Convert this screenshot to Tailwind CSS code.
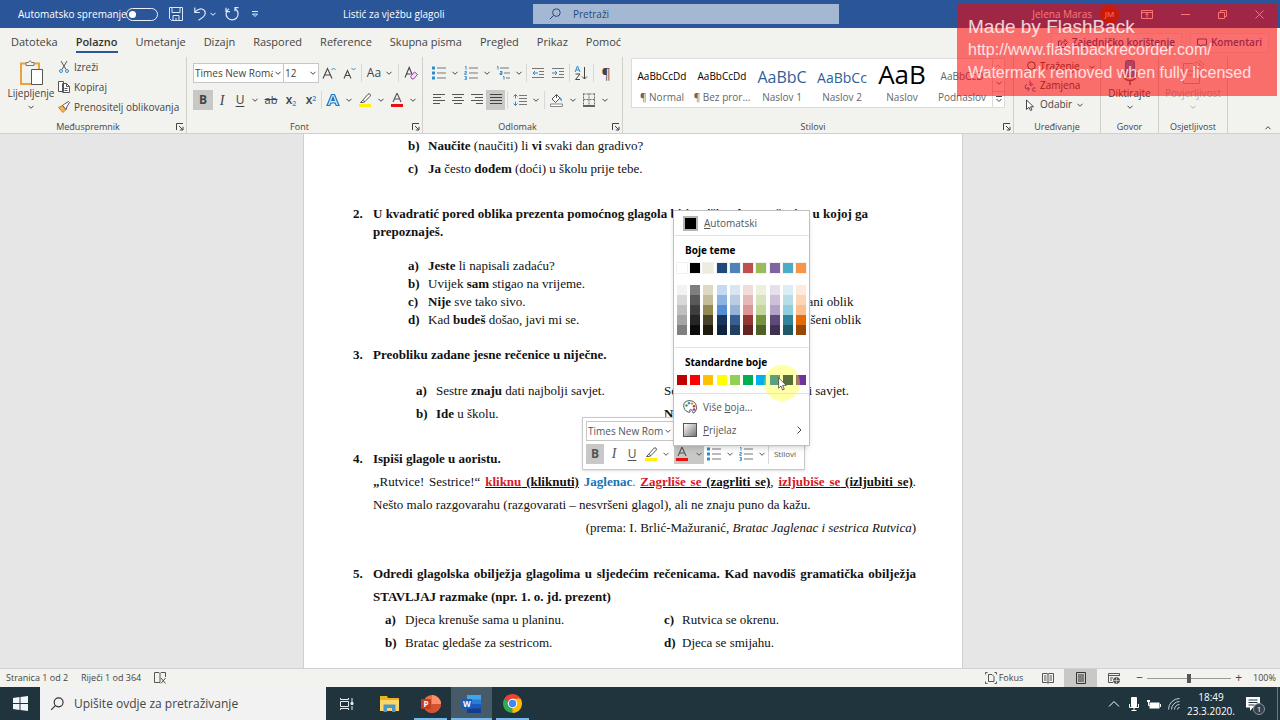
<!DOCTYPE html>
<html lang="hr">
  <head>
    <meta charset="UTF-8" />
    <meta name="viewport" content="width=device-width, initial-scale=1.0" />
    <title>Listić za vježbu glagoli</title>
    <script src="https://cdn.jsdelivr.net/npm/@tailwindcss/browser@4"></script>
  </head>
  <body class="h-screen flex flex-col overflow-hidden bg-[#f2f2ee] font-['Open_Sans',sans-serif] text-[10px] text-[#444]">
    <!-- Shared icons -->
    <svg class="hidden">
      <symbol id="chev" viewBox="0 0 8 8"><path d="M1.5 2.8 4 5.3 6.5 2.8" fill="none" stroke="currentColor" /></symbol>
      <symbol id="launch" viewBox="0 0 8 8"><path d="M.5 7V.5H7M3 3l4 4M7 3.8V7H3.8" fill="none" stroke="currentColor" /></symbol>
      <symbol id="glass" viewBox="0 0 12 12"><path d="M4.6 7.4 1 11" fill="none" stroke="currentColor" /><circle cx="7.4" cy="4.6" r="3.8" fill="none" stroke="currentColor" /></symbol>
      <symbol id="bullets" viewBox="0 0 14 14"><path d="M0 .5h3v3H0zM0 5.5h3v3H0zM0 10.500h3v3H0z" fill="#2e8bcc" /><path d="M5 2h9M5 7h9M5 12h9" stroke="#777" /></symbol>
      <symbol id="numbers" viewBox="0 0 14 14"><path d="M1 .8 2 .3v3.400M.6 5.500h1.800v1.500H.8v1.500h1.800M.6 10.500h1.800v3H.6M1 12h1.400" fill="none" stroke="#2e8bcc" stroke-width=".9" /><path d="M5 2h9M5 7h9M5 12h9" stroke="#777" /></symbol>
      <symbol id="marker" viewBox="0 0 14 14"><path d="M4.500 7.500 10 1.200q1-.9 2 0t.1 2L7 8.500zM4.500 7.500 2.500 9.500h3L7 8.500" fill="#fff" stroke="#555" /><path d="M1 11h12v3H1z" fill="#fff200" /></symbol>
      <symbol id="fontcolor" viewBox="0 0 14 14"><path d="M3 9 7 0l4 9M4.400 6h5.200" fill="none" stroke="#555" stroke-width="1.100" /><path d="M1 11h12v3H1z" fill="#e81010" /></symbol>
    </svg>

    <!-- Title bar -->
    <header class="h-7 shrink-0 flex items-center bg-[#2a5699] text-white">
      <div class="w-[343px] shrink-0 flex items-center pl-[18px]">
        <label for="autosave" class="w-[108px] whitespace-nowrap">Automatsko spremanje</label>
        <input id="autosave" type="checkbox" class="appearance-none w-8 h-[13px] rounded-full border border-white/90 flex items-center before:content-[''] before:block before:size-[7px] before:ml-0.5 before:rounded-full before:bg-white" />
        <button aria-label="Spremi" class="w-9 flex justify-center">
          <svg class="size-[14px]" viewBox="0 0 14 14" fill="none" stroke="#dfe8f5"><path d="M.5.500h13v13H2.500l-2-2zM3 .5v5h8v-5M4 13.500v-5h6v5M7 11v2.500" /></svg>
        </button>
        <button aria-label="Poništi" class="w-[11px] flex justify-center">
          <svg class="w-3 h-[14px] shrink-0" viewBox="0 0 12 14" fill="none" stroke="#dfe8f5" stroke-width="1.200"><path d="M.8.500v5h5M1 5.200Q4.500 1 8 2t3.200 4.500Q11 9.500 4.500 13.200" /></svg>
        </button>
        <svg class="size-2 ml-1"><use href="#chev" /></svg>
        <button aria-label="Ponovi" class="ml-2 flex">
          <svg class="size-[14px]" viewBox="0 0 14 14" fill="none" stroke="#dfe8f5" stroke-width="1.200"><path d="M1 .7v4h4M4 1.800A6 6 0 1 0 10.500 2M13.500.700h-3.500v3.500" /></svg>
        </button>
        <button aria-label="Prilagodi alatnu traku" class="ml-3 flex">
          <svg class="size-2" viewBox="0 0 8 8" fill="none" stroke="#dfe8f5"><path d="M1 1.500h6M1.500 4 4 6.500 6.500 4z" /></svg>
        </button>
      </div>
      <h1 class="w-[190px] shrink-0 whitespace-nowrap">Listić za vježbu glagoli</h1>
      <label class="w-[306px] h-5 flex items-center bg-[#a4b8d3] text-[#264a80] pl-4">
        <svg class="size-3"><use href="#glass" /></svg>
        <input type="search" aria-label="Pretraži" placeholder="Pretraži" class="ml-3 flex-1 min-w-0 bg-transparent outline-none placeholder:text-[#264a80]" />
      </label>
      <div class="ml-auto flex items-center pr-4">
        <span>Jelena Maras</span>
        <span class="ml-2 size-[19px] rounded-full bg-[#8a3a10] flex items-center justify-center text-[8px]">JM</span>
        <button aria-label="Mogućnosti prikaza vrpce" class="ml-[22px]">
          <svg class="w-3 h-[9px]" viewBox="0 0 12 9" fill="none" stroke="#fff"><path d="M.5.500h11v8H.5zM.5 2.500h11M6 7.500v-4M4.500 5 6 3.500 7.500 5" /></svg>
        </button>
        <button aria-label="Minimiziraj" class="ml-7"><svg class="w-[9px] h-[9px]" viewBox="0 0 9 9" stroke="#fff"><path d="M0 4.500h9" /></svg></button>
        <button aria-label="Vrati" class="ml-7"><svg class="size-[9px]" viewBox="0 0 9 9" fill="none" stroke="#fff"><path d="M.5 2.500h6v6h-6zM2.500 2.500v-2h6v6h-2" /></svg></button>
        <button aria-label="Zatvori" class="ml-7"><svg class="size-[9px]" viewBox="0 0 9 9" stroke="#fff"><path d="m.5.500 8 8m0-8-8 8" /></svg></button>
      </div>
    </header>

    <!-- Ribbon tabs -->
    <nav class="h-[29px] shrink-0 flex items-center pl-[11px] pr-[11px] text-[11px] whitespace-nowrap">
      <div class="flex gap-[18px]">
        <a href="#">Datoteka</a>
        <a href="#" class="relative font-semibold text-[#333] after:absolute after:inset-x-0 after:-bottom-0.5 after:h-0.5 after:bg-[#2a5699]">Polazno</a>
        <a href="#">Umetanje</a>
        <a href="#">Dizajn</a>
        <a href="#">Raspored</a>
        <a href="#">Reference</a>
        <a href="#">Skupna pisma</a>
        <a href="#">Pregled</a>
        <a href="#">Prikaz</a>
        <a href="#">Pomoć</a>
      </div>
      <div class="ml-auto flex gap-2 text-[10px] font-semibold text-[#2a5699]">
        <button class="h-5 px-1.5 flex items-center gap-1 bg-white/40 border border-[#e4e4e4]">
          <svg class="size-[10px]" viewBox="0 0 10 10" fill="none" stroke="currentColor"><path d="M3.500 3H.5v6.500h7V7M3 7q0-3.500 4-3.500V1.500l2.500 3L7 7V5.200" /></svg>
          Zajedničko korištenje
        </button>
        <button class="h-5 px-1.5 flex items-center gap-1 bg-white/40 border border-[#e4e4e4]">
          <svg class="size-[10px]" viewBox="0 0 10 10" fill="none" stroke="currentColor"><path d="M.5 1h9v6H5L3 9V7H.5z" /></svg>
          Komentari
        </button>
      </div>
    </nav>

    <!-- Ribbon -->
    <section class="h-[77px] shrink-0 flex border-b border-[#cfcfcf] whitespace-nowrap">
      <!-- Clipboard -->
      <div class="w-[187px] shrink-0 flex flex-col border-r border-[#cfcfcb]">
        <div class="flex-1 flex items-start">
          <button class="w-[58px] pl-1 flex flex-col items-center">
            <svg class="w-6 h-7 mt-0.5" viewBox="0 0 24 28" fill="none"><path d="M8 4.500H2V25h11M15 4.500h5V10" stroke="#e8a33d" stroke-width="2" /><path d="M7 6.500v-3h2.500Q11 0 12.500 3.500H15v3z" fill="#f2f2ee" stroke="#777" /><path d="M12.500 10.500h11v15h-11z" fill="#fff" stroke="#555" /></svg>
            <span class="leading-3">Lijepljenje</span>
            <svg class="size-2 mt-1"><use href="#chev" /></svg>
          </button>
          <div class="flex flex-col">
            <button class="h-5 flex items-center gap-1">
              <svg class="size-3" viewBox="0 0 12 12" fill="none"><path d="m3 0 5 8.500M9 0 4 8.500" stroke="#555" /><circle cx="3" cy="10" r="1.500" stroke="#2e8bcc" /><circle cx="9" cy="10" r="1.500" stroke="#2e8bcc" /></svg>
              Izreži
            </button>
            <button class="h-5 flex items-center gap-1">
              <svg class="w-3 h-3" viewBox="0 0 12 12" fill="#fff" stroke="#555"><path d="M.5.500h5v10h-5zM4.500 2.500h4l3 3v6h-7z" /><path d="M8.500 2.500v3h3M6.500 7.500h3M6.500 9.500h3" fill="none" /></svg>
              Kopiraj
            </button>
            <button class="h-5 flex items-center gap-1">
              <svg class="size-3" viewBox="0 0 12 12"><path d="m.5 6.500 4-2 3.500 4-3 3z" fill="#f5b35a" stroke="#d17a17" /><path d="m4.500 4.500 2-1.500L10.500.500l1 1L9 5.500 8 8.500z" fill="#fff" stroke="#555" /></svg>
              Prenositelj oblikovanja
            </button>
          </div>
        </div>
        <div class="h-3 flex items-center text-[9px] pr-0.5"><span class="flex-1 text-center">Međuspremnik</span><button aria-label="Postavke međuspremnika"><svg class="size-2"><use href="#launch" /></svg></button></div>
      </div>

      <!-- Font -->
      <div class="w-[236px] shrink-0 flex flex-col border-r border-[#cfcfcb]">
        <div class="flex-1 pl-1.5 pt-1.5 flex flex-col gap-[7px]">
          <div class="h-5 flex items-center">
            <div class="relative w-[91px] h-5">
              <select aria-label="Font" class="appearance-none w-full h-full bg-white border border-[#c6c6c6] pl-px pr-[10px] overflow-hidden"><option>Times New Roman</option></select>
              <svg class="absolute right-0.5 top-1.5 size-2 pointer-events-none"><use href="#chev" /></svg>
            </div>
            <div class="relative w-[35px] h-5">
              <select aria-label="Veličina fonta" class="appearance-none w-full h-full bg-white border border-l-0 border-[#c6c6c6] pl-px pr-[10px]"><option>12</option></select>
              <svg class="absolute right-0.5 top-1.5 size-2 pointer-events-none"><use href="#chev" /></svg>
            </div>
            <button aria-label="Povećaj font" class="w-5 flex justify-center"><svg class="size-[14px]" viewBox="0 0 14 14" fill="none"><path d="M1 12.500 5.500 2.500 10 12.500M2.500 9h6" stroke="#444" stroke-width="1.100" /><path d="m9.500 4 2-2 2 2" stroke="#2e8bcc" /></svg></button>
            <button aria-label="Smanji font" class="w-5 flex justify-center"><svg class="size-[14px]" viewBox="0 0 14 14" fill="none"><path d="M2 12.500 5.500 4.500 9 12.500M3.300 9.500h4.400" stroke="#444" stroke-width="1.100" /><path d="m9.500 2 2 2 2-2" stroke="#2e8bcc" /></svg></button>
            <div class="w-px h-[18px] bg-[#d8d8d4] mx-0.5"></div>
            <button aria-label="Promijeni veličinu slova" class="w-8 flex items-center justify-center gap-1 text-[12px]">Aa<svg class="size-2"><use href="#chev" /></svg></button>
            <div class="w-px h-[18px] bg-[#d8d8d4] mx-0.5"></div>
            <button aria-label="Očisti oblikovanje" class="w-5 flex justify-center"><svg class="size-[14px]" viewBox="0 0 14 14" fill="none"><path d="M1 11.500 5.200 1.500 8.400 9M2.700 8h4" stroke="#444" stroke-width="1.100" /><path d="m6.500 10.500 4-4.500 3 2.500-4 4.500h-1.500z" fill="#f3dff5" stroke="#a03ab0" /></svg></button>
          </div>
          <div class="h-5 flex items-center text-[12px]">
            <button class="w-5 h-5 bg-[#c8c8c6] font-bold">B</button>
            <button class="w-[18px] italic font-['Liberation_Serif',serif] text-[14px]">I</button>
            <button class="w-[18px] underline underline-offset-2">U</button>
            <svg class="w-3 h-2"><use href="#chev" /></svg>
            <button class="w-5 line-through text-[11px]">ab</button>
            <button class="w-5 font-semibold">x<sub class="text-[7px] text-[#2e8bcc]">2</sub></button>
            <button class="w-5 font-semibold">x<sup class="text-[7px] text-[#2e8bcc]">2</sup></button>
            <div class="w-px h-[18px] bg-[#d8d8d4] mr-px"></div>
            <button aria-label="Tekstni efekti" class="w-5 flex justify-center"><svg class="size-[14px]" viewBox="0 0 14 14"><path d="M1 12.500 5.500 1.500h3L13 12.500h-2.800L9.200 10H4.800l-1 2.500zM5.800 7.500h2.400L7 4.200z" fill="#cfe6f7" stroke="#1e78c2" stroke-width="1.200" /></svg></button>
            <svg class="w-3 h-2"><use href="#chev" /></svg>
            <button aria-label="Boja isticanja teksta" class="w-5 flex justify-center"><svg class="size-[14px]"><use href="#marker" /></svg></button>
            <svg class="w-3 h-2"><use href="#chev" /></svg>
            <button aria-label="Boja fonta" class="w-5 flex justify-center"><svg class="size-[14px]"><use href="#fontcolor" /></svg></button>
            <svg class="w-3 h-2"><use href="#chev" /></svg>
          </div>
        </div>
        <div class="h-3 flex items-center text-[9px] pr-0.5"><span class="flex-1 text-center">Font</span><button aria-label="Postavke fonta"><svg class="size-2"><use href="#launch" /></svg></button></div>
      </div>

      <!-- Paragraph -->
      <div class="w-[200px] shrink-0 flex flex-col border-r border-[#cfcfcb]">
        <div class="flex-1 pl-1.5 pt-1.5 flex flex-col gap-[7px]">
          <div class="h-5 flex items-center">
            <button aria-label="Grafičke oznake" class="w-5 flex justify-center"><svg class="size-[14px]"><use href="#bullets" /></svg></button>
            <svg class="w-3 h-2"><use href="#chev" /></svg>
            <button aria-label="Numeriranje" class="w-5 flex justify-center"><svg class="size-[14px]"><use href="#numbers" /></svg></button>
            <svg class="w-3 h-2"><use href="#chev" /></svg>
            <button aria-label="Popis s više razina" class="w-5 flex justify-center"><svg class="size-[14px]" viewBox="0 0 14 14" fill="none"><path d="M1 .5h1v3M4 5.500h2v3H4V7h2M7 10.500h1v3" stroke="#2e8bcc" /><path d="M4 2h9M8 7h6M10 12h4" stroke="#777" /></svg></button>
            <svg class="w-3 h-2"><use href="#chev" /></svg>
            <div class="w-px h-[18px] bg-[#d8d8d4] mx-px"></div>
            <button aria-label="Smanji uvlaku" class="w-5 flex justify-center"><svg class="w-3 h-3" viewBox="0 0 12 12" fill="none"><path d="M0 1.500h12M7 4.500h5M7 7.500h5M0 10.500h12" stroke="#777" /><path d="M6 6H1M3 4 1 6l2 2" stroke="#2e8bcc" /></svg></button>
            <button aria-label="Povećaj uvlaku" class="w-5 flex justify-center"><svg class="w-3 h-3" viewBox="0 0 12 12" fill="none"><path d="M0 1.500h12M7 4.500h5M7 7.500h5M0 10.500h12" stroke="#777" /><path d="M0 6h5M3 4l2 2-2 2" stroke="#2e8bcc" /></svg></button>
            <div class="w-px h-[18px] bg-[#d8d8d4] mx-px"></div>
            <button aria-label="Sortiraj" class="w-5 flex justify-center"><svg class="size-[14px]" viewBox="0 0 14 14" fill="none"><path d="M1 6 3.500 0 6 6M2 4h3" stroke="#2e8bcc" /><path d="M1.500 8H6l-4.500 5.500H6M10.500 1v12M8 10.500l2.500 2.500 2.500-2.500" stroke="#444" /></svg></button>
            <div class="w-px h-[18px] bg-[#d8d8d4] mx-0.5"></div>
            <button aria-label="Prikaži oznake" class="w-5 text-[14px]">¶</button>
          </div>
          <div class="h-5 flex items-center">
            <button aria-label="Poravnaj lijevo" class="w-[19px] h-5 flex items-center justify-center"><svg class="w-3 h-3" viewBox="0 0 12 12" stroke="#555"><path d="M0 .5h12M0 3.500h8M0 6.500h12M0 9.500h7" /></svg></button>
            <button aria-label="Centriraj" class="w-[19px] h-5 flex items-center justify-center"><svg class="w-3 h-3" viewBox="0 0 12 12" stroke="#555"><path d="M0 .5h12M2 3.500h8M0 6.500h12M2 9.500h8" /></svg></button>
            <button aria-label="Poravnaj desno" class="w-[19px] h-5 flex items-center justify-center"><svg class="w-3 h-3" viewBox="0 0 12 12" stroke="#555"><path d="M0 .5h12M4 3.500h8M0 6.500h12M5 9.500h7" /></svg></button>
            <button aria-label="Poravnaj obostrano" class="w-[19px] h-5 flex items-center justify-center bg-[#c8c8c6]"><svg class="w-3 h-3" viewBox="0 0 12 12" stroke="#444"><path d="M0 .5h12M0 3.500h12M0 6.500h12M0 9.500h12" /></svg></button>
            <div class="w-px h-[18px] bg-[#d8d8d4] mx-0.5"></div>
            <button aria-label="Prored" class="w-5 flex justify-center"><svg class="w-[14px] h-3" viewBox="0 0 14 12" fill="none"><path d="M2.500.500v4M2.500 7.500v4M.5 2.500l2-2 2 2M.5 9.500l2 2 2-2" stroke="#2e8bcc" /><path d="M6 1.500h8M6 4.500h8M6 7.500h8M6 10.500h8" stroke="#777" /></svg></button>
            <svg class="w-3 h-2"><use href="#chev" /></svg>
            <div class="w-px h-[18px] bg-[#d8d8d4] mx-0.5"></div>
            <button aria-label="Sjenčanje" class="w-5 flex justify-center"><svg class="size-[14px]" viewBox="0 0 14 14" fill="#fff"><path d="M6.500 1.500 2 6l3.500 3.500L10 5zM6.500 1.500V5" stroke="#555" /><path d="M9.500 4.500q2.500 0 2.300 4-1.800-1-2.300-4" fill="#2e8bcc" /><path d="M.5 11h12v2.500H.5z" stroke="#888" /></svg></button>
            <svg class="w-3 h-2"><use href="#chev" /></svg>
            <button aria-label="Obrubi" class="w-5 flex justify-center"><svg class="size-[14px]" viewBox="0 0 14 14" fill="none"><path d="M1.500.500v12M7 .5v12M12.500.500v12M1.500 1h11M1.500 6.500h11" stroke="#666" stroke-dasharray="2 1" /><path d="M1 13h12" stroke="#333" stroke-width="1.500" /></svg></button>
            <svg class="w-3 h-2"><use href="#chev" /></svg>
          </div>
        </div>
        <div class="h-3 flex items-center text-[9px] pr-0.5"><span class="flex-1 text-center">Odlomak</span><button aria-label="Postavke odlomka"><svg class="size-2"><use href="#launch" /></svg></button></div>
      </div>

      <!-- Styles -->
      <div class="flex-1 min-w-0 flex flex-col border-r border-[#cfcfcb]">
        <div class="flex-1 pl-2 pr-2 pt-px">
          <div class="h-[50px] flex bg-white border border-[#dcdcdc] text-[#666]">
            <button class="flex-1 min-w-0 flex flex-col items-center"><span class="h-[31px] pt-2.5 text-black">AaBbCcDd</span><span>¶ Normal</span></button>
            <button class="flex-1 min-w-0 flex flex-col items-center"><span class="h-[31px] pt-2.5 text-black">AaBbCcDd</span><span>¶ Bez pror...</span></button>
            <button class="flex-1 min-w-0 flex flex-col items-center"><span class="h-[31px] pt-1.5 text-[16px] text-[#2f5f98]">AaBbC</span><span>Naslov 1</span></button>
            <button class="flex-1 min-w-0 flex flex-col items-center"><span class="h-[31px] pt-2 text-[14px] text-[#2f5f98]">AaBbCc</span><span>Naslov 2</span></button>
            <button class="flex-1 min-w-0 flex flex-col items-center"><span class="h-[31px] overflow-hidden text-[26px] leading-[31px] text-black">AaB</span><span>Naslov</span></button>
            <button class="flex-1 min-w-0 flex flex-col items-center"><span class="h-[31px] pt-2.5">AaBbCcD</span><span>Podnaslov</span></button>
            <div class="w-3 flex flex-col border-l border-[#dcdcdc]">
              <button aria-label="Gore" class="flex-1 flex items-center justify-center rotate-180 text-[#bbb]"><svg class="size-2"><use href="#chev" /></svg></button>
              <button aria-label="Dolje" class="flex-1 flex items-center justify-center border-y border-[#dcdcdc]"><svg class="size-2"><use href="#chev" /></svg></button>
              <button aria-label="Više stilova" class="flex-1 flex items-center justify-center"><svg class="size-2" viewBox="0 0 8 8" fill="none" stroke="#444"><path d="M1 1.500h6M1.500 4 4 6.500 6.500 4" /></svg></button>
            </div>
          </div>
        </div>
        <div class="h-3 flex items-center text-[9px] pr-0.5"><span class="flex-1 text-center">Stilovi</span><button aria-label="Postavke stilova"><svg class="size-2"><use href="#launch" /></svg></button></div>
      </div>

      <!-- Editing -->
      <div class="w-[87px] shrink-0 flex flex-col border-r border-[#cfcfcb]">
        <div class="flex-1 pl-2.5">
          <button class="h-[19px] flex items-center gap-1"><svg class="size-3"><use href="#glass" /></svg>Traženje<svg class="size-2 ml-1"><use href="#chev" /></svg></button>
          <button class="h-[19px] flex items-center gap-1"><svg class="size-3" viewBox="0 0 12 12" fill="none"><path d="M6 .5v5M6 4q2-1.500 2.500 0T6 5.500" stroke="#a03ab0" /><path d="M3 4Q0 6 1.500 8.500L5 9M3.500 7 5.500 9l-2 2M11.500 8q-3-1-3 1.500t3 1.500" stroke="#2e6fb5" /></svg>Zamjena</button>
          <button class="h-[19px] flex items-center gap-1"><svg class="size-3" viewBox="0 0 12 12" fill="#fff" stroke="#444"><path d="M2.500 1v9.500L5 8.300 6.500 11.500l1.500-.7-1.500-3h3z" /></svg>Odabir<svg class="size-2"><use href="#chev" /></svg></button>
        </div>
        <div class="h-3 flex items-center justify-center text-[9px]">Uređivanje</div>
      </div>

      <!-- Dictate -->
      <div class="w-[58px] shrink-0 flex flex-col border-r border-[#cfcfcb]">
        <button class="flex-1 flex flex-col items-center justify-start">
          <svg class="w-5 h-7 mt-0.5" viewBox="0 0 20 28" fill="none"><rect x="5.500" y="1.500" width="9" height="16" rx="2" fill="#5b8fd6" stroke="#3b6db0" /><path d="M3 13q0 8.500 7 8.500t7-8.500M10 21.500V26" stroke="#666" stroke-width="1.500" /></svg>
          <span class="leading-3">Diktirajte</span>
          <svg class="size-2 mt-1"><use href="#chev" /></svg>
        </button>
        <div class="h-3 flex items-center justify-center text-[9px]">Govor</div>
      </div>

      <!-- Sensitivity -->
      <div class="w-[69px] shrink-0 flex flex-col border-r border-[#cfcfcb]">
        <button disabled class="flex-1 flex flex-col items-center justify-start text-[#b3b3b0]">
          <svg class="w-6 h-7 mt-0.5" viewBox="0 0 24 28" fill="none" stroke="#b3b3b0"><path d="M12 4.500H2.500v20h16V16M6 12h6M6 16h5M13 5.500l3-3 6 6-3 3zM11 13l8-8M18 1l5 5" /></svg>
          <span class="leading-3">Povjerljivost</span>
          <svg class="size-2 mt-1"><use href="#chev" /></svg>
        </button>
        <div class="h-3 flex items-center justify-center text-[9px]">Osjetljivost</div>
      </div>
      <div class="w-[52px] shrink-0 flex items-end justify-end pr-2 pb-px">
        <button aria-label="Sažmi vrpcu" class="rotate-180"><svg class="size-2"><use href="#chev" /></svg></button>
      </div>
    </section>

    <!-- Document -->
    <main class="flex-1 min-h-0 overflow-hidden bg-[#e6e6e6] pr-[14px]">
      <article class="relative w-[660px] min-h-full mx-auto bg-white border-x border-[#d0d0d0] pl-[49px] pr-[46px] font-['Liberation_Serif',serif] text-[13px] leading-[23px] text-[#111] whitespace-nowrap">
        <ol class="pl-[55px]">
          <li class="flex"><b class="w-5">b)</b><p><b>Naučite</b> (naučiti) li <b>vi</b> svaki dan gradivo?</p></li>
          <li class="flex"><b class="w-5">c)</b><p><b>Ja</b> često <b>dođem</b> (doći) u školu prije tebe.</p></li>
        </ol>

        <h2 class="flex mt-[25px] leading-[18px] font-bold"><span class="w-5 shrink-0">2.</span><span>U kvadratić pored oblika prezenta pomoćnog glagola biti upišite slovo rečenice u kojoj ga<br />prepoznaješ.</span></h2>
        <ol class="mt-4 pl-[55px] leading-[18px]">
          <li class="flex"><b class="w-5">a)</b><p><b>Jeste</b> li napisali zadaću?</p></li>
          <li class="flex"><b class="w-5">b)</b><p>Uvijek <b>sam</b> stigao na vrijeme.</p></li>
          <li class="flex"><b class="w-5">c)</b><p class="w-[342px]"><b>Nije</b> sve tako sivo.</p><p>zanijekani oblik</p></li>
          <li class="flex"><b class="w-5">d)</b><p class="w-[342px]">Kad <b>budeš</b> došao, javi mi se.</p><p>nenaglašeni oblik</p></li>
        </ol>

        <h2 class="flex mt-[17px] leading-[18px] font-bold"><span class="w-5">3.</span>Preobliku zadane jesne rečenice u niječne.</h2>
        <ol class="mt-[15px] pl-[63px]">
          <li class="flex"><b class="w-5">a)</b><p class="w-[228px]">Sestre <b>znaju</b> dati najbolji savjet.</p><p>Sestre <b>ne znaju</b> dati najbolji savjet.</p></li>
          <li class="flex"><b class="w-5">b)</b><p class="w-[228px]"><b>Ide</b> u školu.</p><p><b>Ne ide</b> u školu.</p></li>
        </ol>

        <h2 class="flex mt-[22px] font-bold"><span class="w-5">4.</span>Ispiši glagole u aoristu.</h2>
        <div class="pl-5">
          <p class="[text-align-last:justify]"><b>„</b>Rutvice! Sestrice!“ <b><u><span class="text-[#d8181f]">kliknu</span> (kliknuti)</u> <span class="text-[#1773b8]">Jaglenac</span></b><span class="text-[#1773b8]">.</span> <b><u><span class="text-[#d8181f]">Zagrliše se</span> (zagrliti se)</u></b>, <b><u><span class="text-[#d8181f]">izljubiše se</span> (izljubiti se)</u></b>.</p>
          <p>Nešto malo razgovarahu (razgovarati – nesvršeni glagol), ali ne znaju puno da kažu.</p>
          <p class="text-right">(prema: I. Brlić-Mažuranić, <i>Bratac Jaglenac i sestrica Rutvica</i>)</p>
        </div>

        <h2 class="flex mt-[23px] font-bold"><span class="w-5 shrink-0">5.</span><span class="flex-1 text-justify whitespace-normal">Odredi glagolska obilježja glagolima u sljedećim rečenicama. Kad navodiš gramatička obilježja STAVLJAJ razmake (npr. 1. o. jd. prezent)</span></h2>
        <ol class="pl-8">
          <li class="flex"><b class="w-5">a)</b><p class="w-[259px]">Djeca krenuše sama u planinu.</p><b class="w-[18px]">c)</b><p>Rutvica se okrenu.</p></li>
          <li class="flex"><b class="w-5">b)</b><p class="w-[259px]">Bratac gledaše za sestricom.</p><b class="w-[18px]">d)</b><p>Djeca se smijahu.</p></li>
        </ol>

        <!-- Mini toolbar -->
        <div class="absolute left-[278px] top-[283px] w-[223px] h-[53px] p-[3px] bg-white border border-[#c8c8c8] shadow font-['Open_Sans',sans-serif] text-[10px] leading-4 text-[#555]">
          <div class="relative w-[88px] h-5">
            <select aria-label="Font odabranog teksta" class="appearance-none w-full h-full bg-white border border-[#c6c6c6] pl-px pr-[10px] overflow-hidden"><option>Times New Roman</option></select>
            <svg class="absolute right-0.5 top-1.5 size-2 pointer-events-none"><use href="#chev" /></svg>
          </div>
          <div class="flex items-center mt-[3px] h-5 text-[12px]">
            <button class="w-[18px] h-5 bg-[#c8c8c6] font-bold">B</button>
            <button class="w-5 italic font-['Liberation_Serif',serif] text-[14px]">I</button>
            <button class="w-4 underline underline-offset-2">U</button>
            <button aria-label="Istakni odabrano" class="w-[22px] flex justify-center"><svg class="size-[14px]"><use href="#marker" /></svg></button>
            <svg class="w-2 h-2 mr-1"><use href="#chev" /></svg>
            <button aria-label="Boja odabranog teksta" class="w-[30px] h-5 flex items-center justify-between px-px bg-[#c8c8c6]"><svg class="size-[14px]"><use href="#fontcolor" /></svg><svg class="size-2"><use href="#chev" /></svg></button>
            <button aria-label="Popis s oznakama" class="w-5 flex justify-center"><svg class="size-[14px]"><use href="#bullets" /></svg></button>
            <svg class="w-3 h-2"><use href="#chev" /></svg>
            <button aria-label="Popis s brojevima" class="w-5 flex justify-center"><svg class="size-[14px]"><use href="#numbers" /></svg></button>
            <svg class="w-3 h-2"><use href="#chev" /></svg>
            <button class="h-5 flex-1 border-l border-[#d8d8d8] text-[8px]">Stilovi</button>
          </div>
        </div>

        <!-- Font colour menu -->
        <div class="absolute left-[369px] top-[76px] w-[137px] h-[236px] bg-white border border-[#c0c0c0] shadow-md font-['Open_Sans',sans-serif] text-[10px] leading-4 text-[#555]">
          <button class="w-full h-[25px] flex items-center pl-[9px] gap-1.5 border-b border-[#e2e2e2]"><span class="size-[15px] bg-black border-2 border-[#b5b5b5] shrink-0"></span><span><u>A</u>utomatski</span></button>
          <h3 class="h-[27px] flex items-center pl-[11px] font-bold text-black">Boje teme</h3>
          <div id="themeColors" class="grid grid-cols-10 px-px justify-items-center"></div>
          <div id="themeShades" class="mt-3 grid grid-cols-10 px-px justify-items-center"></div>
          <h3 class="mt-3 border-t border-[#e2e2e2] h-7 flex items-center pl-[11px] font-bold text-black">Standardne boje</h3>
          <div id="standardColors" class="grid grid-cols-10 px-px justify-items-center"></div>
          <button class="mt-2 w-full h-[26px] border-t border-[#e2e2e2] flex items-center pl-[9px] gap-1.5">
            <svg class="size-[14px]" viewBox="0 0 14 14" fill="#fff"><path d="M5 12Q.5 10 .7 5.500T6 .7t7 4-1.500 8q-2 .8-2-1t-1.700-2.200T7 12q-.8.500-2 0" stroke="#555" /><circle cx="3.500" cy="5.500" r="1.200" fill="#3a9a4a" /><circle cx="6" cy="3.300" r="1.200" fill="#2e8bcc" /><circle cx="9" cy="3.600" r="1.200" fill="#e08a1e" /><circle cx="11" cy="6.200" r="1.200" fill="#d83030" /><circle cx="11" cy="9.500" r="1.200" fill="#7a3ab0" /></svg>
            <span>Više <u>b</u>oja...</span>
          </button>
          <button class="w-full h-[22px] flex items-center pl-[9px] pr-1.5 gap-1.5">
            <span class="size-[14px] border border-[#555] bg-linear-to-br from-white to-[#777]"></span>
            <span><u>P</u>rijelaz</span>
            <svg class="size-2 ml-auto" viewBox="0 0 8 8" fill="none" stroke="#444"><path d="m2.500.500 3.500 3.500-3.500 3.500" /></svg>
          </button>
          <!-- Pointer with click highlight -->
          <div class="absolute left-[90px] top-[154px] size-9 rounded-full bg-[#ffff00]/35 pointer-events-none">
            <svg class="absolute left-[14px] top-[12px] w-[9px] h-[14px]" viewBox="0 0 9 14" fill="#fff" stroke="#444" stroke-width=".8"><path d="M.6.800v10.400L3 9l1.600 4 1.700-.8L4.700 8.400h3.600z" /></svg>
          </div>
        </div>
      </article>
    </main>

    <!-- Status bar -->
    <footer class="h-[19px] shrink-0 flex items-center border-t border-[#d0d0d0] pl-1.5 text-[9px] whitespace-nowrap">
      <span class="w-[75px]">Stranica 1 od 2</span>
      <span class="w-[73px]">Riječi 1 od 364</span>
      <button aria-label="Provjera pravopisa"><svg class="w-3 h-3" viewBox="0 0 12 12" fill="none" stroke="#555"><path d="M6 1.500v9H.5v-10H5l1 1 1-1h4.500V5M7 6l4.500 5.500M11.500 6 7 11.500" /></svg></button>
      <div class="ml-auto flex items-center h-full">
        <button class="flex items-center gap-0.5 mr-2"><svg class="size-3" viewBox="0 0 12 12" fill="none" stroke="#555"><path d="M2.500.500h-2v2M9.500.500h2v2M.5 9.500v2h2M11.500 9.500v2h-2M3.500 2.500H7l2 2v5H3.500z" /></svg>Fokus</button>
        <button aria-label="Prikaz za čitanje" class="w-[33px] flex justify-center"><svg class="w-3 h-3" viewBox="0 0 12 12" fill="none" stroke="#555"><path d="M6 2v9M.5 1.500H5l1 .7 1-.7h4.500v9H7l-1 .6-1-.6H.5zM2 4h2.500M2 6h2.500M2 8h2.500M7.500 4H10M7.500 6H10M7.500 8H10" /></svg></button>
        <button aria-label="Izgled ispisa" class="w-[33px] h-full flex items-center justify-center bg-[#c8c8c6]"><svg class="w-[10px] h-3" viewBox="0 0 10 12" fill="none" stroke="#333"><path d="M.5.500h9v11h-9zM2 3h6M2 5h6M2 7h6M2 9h6" /></svg></button>
        <button aria-label="Web-izgled" class="w-[33px] flex justify-center"><svg class="w-3 h-3" viewBox="0 0 12 12" fill="none" stroke="#555"><path d="M5 10.500H.5v-9h11V4M.5 3.500h11M2 6h3M2 8h2" /><circle cx="8.500" cy="8.500" r="3" fill="#555" /><path d="M5.500 8.500h6M8.500 5.500v6" stroke="#eee" stroke-width=".6" /></svg></button>
        <span class="ml-1.5 text-[12px]">−</span>
        <input type="range" min="0" max="100" value="50" aria-label="Zumiranje" class="appearance-none w-[84px] h-px mx-1 bg-[#999] [&::-webkit-slider-thumb]:appearance-none [&::-webkit-slider-thumb]:w-1 [&::-webkit-slider-thumb]:h-[9px] [&::-webkit-slider-thumb]:bg-[#555]" />
        <span class="text-[12px]">+</span>
        <span class="w-[38px] pl-[11px]">100%</span>
      </div>
    </footer>

    <!-- Taskbar -->
    <footer class="h-[33px] shrink-0 flex items-center bg-[#20343e] text-white">
      <button aria-label="Start" class="w-10 flex justify-center"><svg class="size-[15px]" viewBox="0 0 15 15" fill="#f2f6f8"><path d="m0 2 6.500-.9v6H0zM7.500 1 15 0v7.100H7.500zM0 8h6.500v6L0 13zM7.500 8H15v7l-7.500-1z" /></svg></button>
      <label class="w-[286px] h-full bg-[#f2f2f2] text-[#333] flex items-center pl-2.5">
        <svg class="size-[14px]"><use href="#glass" /></svg>
        <input type="search" aria-label="Traži" placeholder="Upišite ovdje za pretraživanje" class="ml-2.5 flex-1 min-w-0 bg-transparent outline-none text-[12px] placeholder:text-[#444]" />
      </label>
      <button aria-label="Prikaz zadataka" class="w-[42px] flex justify-center"><svg class="w-[14px] h-[14px]" viewBox="0 0 14 14" fill="none" stroke="#e8edf0"><path d="M.5 1v1.500h8V1M.5 4.500h8v5h-8zM.5 13v-1.500h8V13M12 1v4M12 9v4" /><path d="M11 5.500h2v2h-2z" fill="#e8edf0" /></svg></button>
      <button aria-label="Eksplorer za datoteke" class="w-[42px] h-full flex items-center justify-center"><svg class="w-[19px] h-4" viewBox="0 0 19 16"><path d="M0 0h7l1 2h11v13H0z" fill="#e8b425" /><path d="M0 4h19v11H0z" fill="#fcd667" /><path d="M3.500 16V8.500h12V16h-3.500v-4H7v4z" fill="#4a96c8" /></svg></button>
      <button aria-label="PowerPoint" class="w-[41px] h-full flex items-center justify-center relative after:absolute after:bottom-0 after:inset-x-1 after:h-0.5 after:bg-[#76b9ed]">
        <svg class="w-5 h-[18px]" viewBox="0 0 20 18"><circle cx="11" cy="9" r="9" fill="#ed6c47" /><path d="M11 0a9 9 0 0 1 9 9h-9z" fill="#ff8f6b" /><path d="M2 9h18a9 9 0 0 1-18 0" fill="#d35230" /><rect y="4" width="10" height="10" rx="1" fill="#c43e1c" /><text x="2.500" y="12" font-size="8" font-weight="700" fill="#fff">P</text></svg>
      </button>
      <button aria-label="Word" class="w-[41px] h-full flex items-center justify-center bg-[#465b67] relative after:absolute after:bottom-0 after:inset-x-0 after:h-0.5 after:bg-[#76b9ed]">
        <svg class="w-5 h-[18px]" viewBox="0 0 20 18"><path d="M5 0h14v5H5z" fill="#41a5ee" /><path d="M5 4.500h14V9H5z" fill="#2b7cd3" /><path d="M5 9h14v4.500H5z" fill="#185abd" /><path d="M5 13.500h14V18H5z" fill="#103f91" /><rect y="4" width="10" height="10" rx="1" fill="#185abd" /><text x="1" y="12" font-size="8" font-weight="700" fill="#fff">W</text></svg>
      </button>
      <button aria-label="Chrome" class="w-[41px] h-full flex items-center justify-center relative after:absolute after:bottom-0 after:inset-x-1 after:h-0.5 after:bg-[#76b9ed]">
        <svg class="size-[19px]" viewBox="0 0 20 20"><path d="M10 10 1.340 5A10 10 0 0 1 18.660 5z" fill="#ea4335" /><path d="M10 10 18.660 5A10 10 0 0 1 10 20z" fill="#fbbc05" /><path d="M10 10v10A10 10 0 0 1 1.340 5z" fill="#34a853" /><path d="M10 5h8.660L14.300 12.500zM14.300 12.500 10 20 10 14z" fill="#fbbc05" /><circle cx="10" cy="10" r="5" fill="#fff" /><circle cx="10" cy="10" r="3.900" fill="#4285f4" /></svg>
      </button>
      <div class="ml-auto h-full flex items-center">
        <button aria-label="Skrivene ikone" class="w-5 flex justify-center"><svg class="w-3 h-2" viewBox="0 0 12 8" fill="none" stroke="#fff"><path d="m1 6.500 5-5 5 5" /></svg></button>
        <button aria-label="Mikrofon" class="w-5 flex justify-center"><svg class="w-[10px] h-[14px]" viewBox="0 0 10 14" fill="#fff"><rect x="2" width="6" height="10" rx="1" /><path d="M.5 7v3.500h9V7M5 10.500V13M2.500 13.500h5" fill="none" stroke="#fff" /></svg></button>
        <button aria-label="Baterija" class="w-5 flex justify-center"><svg class="w-[14px] h-[10px]" viewBox="0 0 14 10" fill="#fff"><path d="M2.500 3.500h10v6h-10z" /><path d="M13 5h1v3h-1zM0 1h3v2H0z" /><path d="M1.500 2v4.500h2" fill="none" stroke="#fff" /></svg></button>
        <button aria-label="Mreža" class="w-5 flex justify-center"><svg class="size-3" viewBox="0 0 12 12" fill="none" stroke="#c4ced3"><path d="M.5 11.500A11 11 0 0 1 11.500.500M3.500 11.500a8 8 0 0 1 8-8M6.500 11.500a5 5 0 0 1 5-5M9.500 11.500a2 2 0 0 1 2-2" /></svg></button>
        <time class="w-[54px] text-center leading-[14px]">18:49<br />23.3.2020.</time>
        <button aria-label="Obavijesti, 1 nova" class="relative w-[40px] h-full border-r border-[#6b7a82] mr-0.5">
          <svg class="w-[14px] h-[14px] ml-2" viewBox="0 0 14 14"><path d="M0 0h14v10.500H7L4 14v-3.500H0z" fill="#fff" /><path d="M2.500 3h9M2.500 5.500h9M2.500 8h6" stroke="#20343e" /></svg>
          <span class="absolute left-[15px] top-4 size-3 rounded-full bg-[#35424a] border border-[#8b979d] text-[8px] leading-[10px]">1</span>
        </button>
      </div>
    </footer>

    <!-- Recorder watermark -->
    <div class="absolute right-[3px] top-1 w-80 h-[92px] pl-[11px] pt-[11px] bg-[#ff0000]/55 font-['Liberation_Sans',sans-serif] text-[16px] leading-[23px] text-white/80 whitespace-nowrap pointer-events-none">
      <p class="text-[19px]">Made by FlashBack</p>
      <p>http://www.flashbackrecorder.com/</p>
      <p>Watermark removed when fully licensed</p>
    </div>

    <script>
      const themeColors = ["#ffffff", "#000000", "#eeece1", "#1f497d", "#4f81bd", "#c0504d", "#9bbb59", "#8064a2", "#4bacc6", "#f79646"];
      const themeShades = [
        ["#f2f2f2", "#7f7f7f", "#ddd9c3", "#c6d9f0", "#dbe5f1", "#f2dcdb", "#ebf1dd", "#e5e0ec", "#dbeef3", "#fdeada"],
        ["#d8d8d8", "#595959", "#c4bd97", "#8db3e2", "#b8cce4", "#e5b9b7", "#d7e3bc", "#ccc1d9", "#b7dde8", "#fbd5b5"],
        ["#bfbfbf", "#3f3f3f", "#938953", "#548dd4", "#95b3d7", "#d99694", "#c3d69b", "#b2a2c7", "#92cddc", "#fac08f"],
        ["#a5a5a5", "#262626", "#494429", "#17365d", "#366092", "#953734", "#76923c", "#5f497a", "#31859b", "#e36c09"],
        ["#7f7f7f", "#0c0c0c", "#1d1b10", "#0f243e", "#244061", "#632423", "#4f6128", "#3f3151", "#205867", "#974806"],
      ];
      const standardColors = ["#c00000", "#ff0000", "#ffc000", "#ffff00", "#92d050", "#00b050", "#00b0f0", "#0070c0", "#002060", "#7030a0"];

      function addSwatches(id, colors, className) {
        const container = document.getElementById(id);
        colors.forEach((color) => {
          const button = document.createElement("button");
          button.className = className;
          button.style.backgroundColor = color;
          button.setAttribute("aria-label", color);
          container.appendChild(button);
        });
      }

      addSwatches("themeColors", themeColors, "size-[10px] outline outline-[#f0f0f0]");
      addSwatches("themeShades", themeShades.flat(), "size-[10px]");
      addSwatches("standardColors", standardColors, "size-[10px]");
    </script>
  </body>
</html>
